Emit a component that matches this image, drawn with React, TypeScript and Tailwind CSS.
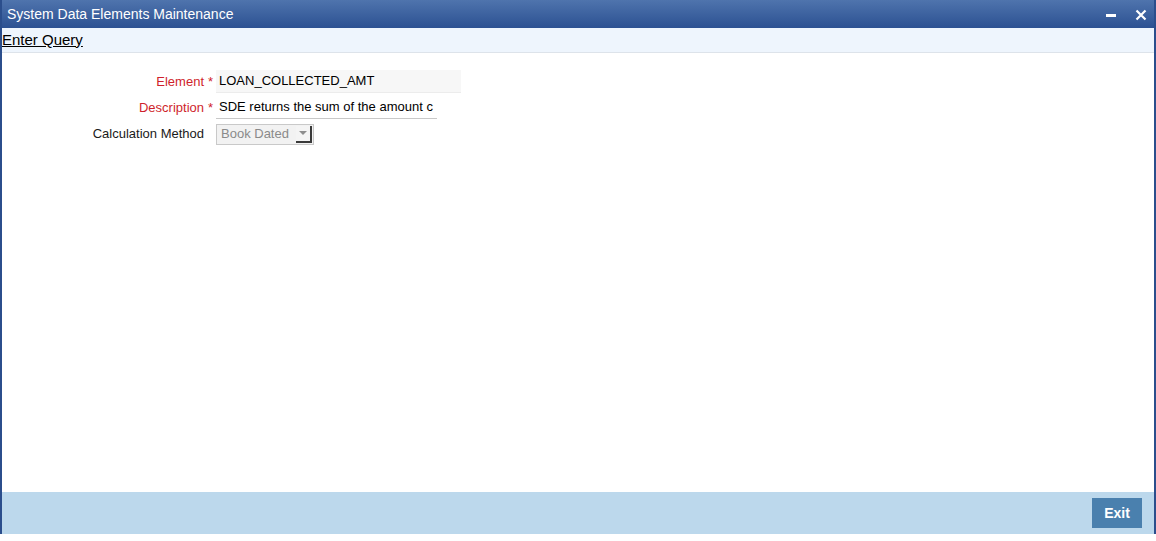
export default function App() {
  return (
    <div className="h-[541px] w-[1156px] bg-white font-['Liberation_Sans',Arial,sans-serif]">
      <div className="flex h-[534px] flex-col border-l-2 border-r-2 border-[#2b4e8c]">
        {/* title bar */}
        <div className="flex h-[28px] items-center justify-between bg-gradient-to-b from-[#4f74ad] to-[#2c5192] pl-[5px] pr-[7px] text-white">
          <span className="text-[14px]">System Data Elements Maintenance</span>
          <div className="flex items-center gap-[19px]">
            <span className="block h-[3px] w-[10px] translate-y-[1px] bg-white" />
            <svg width="12" height="12" viewBox="0 0 12 12" className="translate-y-[1px]">
              <path d="M1.5 1.5 L10.5 10.5 M10.5 1.5 L1.5 10.5" stroke="white" strokeWidth="2.2" />
            </svg>
          </div>
        </div>

        {/* toolbar */}
        <div className="flex h-[25px] items-center border-b border-[#dde3ea] bg-[#eef5fd] text-[15px] text-black">
          <span className="underline">Enter Query</span>
        </div>

        {/* form */}
        <div className="flex-1 pt-[17px] text-[13px]">
          <div className="flex h-[23px] items-center">
            <span className="w-[202px] text-right text-[#cf1f2c]">Element</span>
            <span className="w-[12px] pl-[4px] text-[#cf1f2c]">*</span>
            <div className="flex h-[23px] w-[245px] items-center border-b border-[#ececec] bg-[#f7f7f7] pl-[3px] text-black">
              LOAN_COLLECTED_AMT
            </div>
          </div>
          <div className="mt-[3px] flex h-[23px] items-center">
            <span className="w-[202px] text-right text-[#cf1f2c]">Description</span>
            <span className="w-[12px] pl-[4px] text-[#cf1f2c]">*</span>
            <div className="flex h-[23px] w-[221px] items-center border-b border-[#c8c8c8] bg-white pl-[3px] text-black">
              SDE returns the sum of the amount c
            </div>
          </div>
          <div className="mt-[4px] flex h-[22px] items-center">
            <span className="w-[202px] text-right text-[#1a1a1a]">Calculation Method</span>
            <span className="w-[12px]" />
            <div className="flex h-[21px] w-[98px] items-center justify-between border border-[#c9c9c9] bg-[#f2f2f2] pl-[4px] text-[#8a8a8a]">
              <span>Book Dated</span>
              <span className="mr-[1px] flex h-[17px] w-[16px] items-center justify-center border-b-2 border-r-2 border-[#3a3a3a] bg-[#f4f4f4]">
                <svg width="8" height="5" viewBox="0 0 8 5">
                  <path d="M0 0 H8 L4 4 Z" fill="#8d8d8d" />
                </svg>
              </span>
            </div>
          </div>
        </div>

        {/* footer */}
        <div className="flex h-[42px] items-center justify-end bg-[#bcd8ec] pr-[12px]">
          <button className="h-[30px] w-[50px] bg-[#4a80ae] text-[14px] font-bold text-white">
            Exit
          </button>
        </div>
      </div>
    </div>
  );
}
